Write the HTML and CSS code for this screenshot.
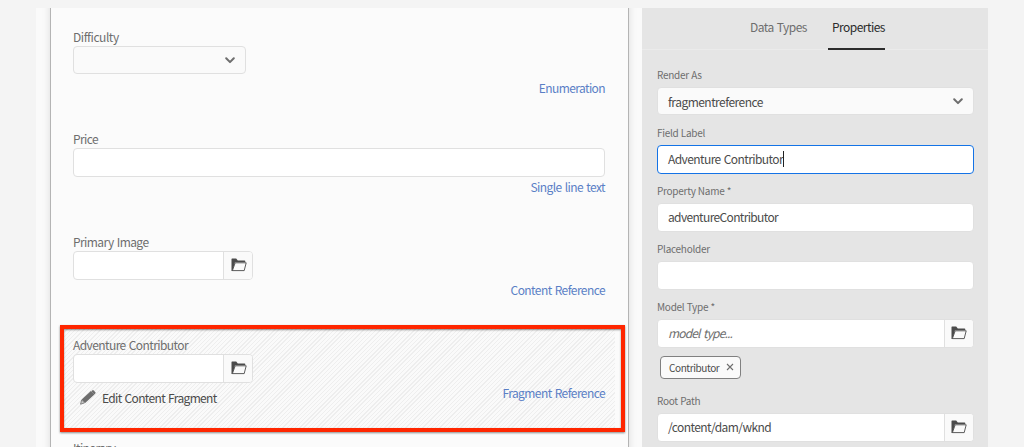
FILE: index.html
```html
<!DOCTYPE html>
<html lang="en">
<head>
<meta charset="utf-8">
<title>Content Fragment Model Editor</title>
<link rel="stylesheet" href="styles.css">
</head>
<body>
<svg class="defs" aria-hidden="true">
  <symbol id="folder" viewBox="0 0 16 14"><path d="M.5 13V1.2Q.5.6 1.1.6h4.1l1.6 1.9h6.7q.8 0 .8.8v.9H4L1.8 13z" fill="#4b4b4b"/><path d="M1.4 12.6 4.2 4.8h11l-2 7.8z" fill="#fafafa" stroke="#4b4b4b" stroke-width=".9" stroke-linejoin="round"/></symbol>
  <symbol id="chevron" viewBox="0 0 10 7"><path d="M1.2 1.2 5 5.1l3.8-3.9" fill="none" stroke="#6e6e6e" stroke-width="2" stroke-linecap="round" stroke-linejoin="round"/></symbol>
  <symbol id="pencil" viewBox="0 0 16 15"><path d="M11.3 1.3 12.5.3q.5-.4 1 0l1.9 1.9q.4.5 0 1l-1.2 1.2z" fill="#6e6e6e"/><path d="M10.9 1.1 14.4 4.5 5.2 13 1.7 9.5z" fill="#6e6e6e"/><path d="M1.7 9.9.5 14.2l4.1-1.3z" fill="#c8c8c8" stroke="#6e6e6e" stroke-width=".8" stroke-linejoin="round"/></symbol>
</svg>
<div class="app">
  <main class="canvas">
    <div class="sheet">
      <section class="item first">
        <div class="label">Difficulty</div>
        <div class="select small"><svg class="chev"><use href="#chevron"/></svg></div>
        <div class="foot loose"><span class="type enumeration">Enumeration</span></div>
      </section>
      <section class="item">
        <div class="label">Price</div>
        <div class="box"></div>
        <div class="foot"><span class="type">Single line text</span></div>
      </section>
      <section class="item">
        <div class="label">Primary Image</div>
        <div class="picker short"><div class="entry"></div><div class="browse"><svg class="folder"><use href="#folder"/></svg></div></div>
        <div class="foot"><span class="type">Content Reference</span></div>
      </section>
      <section class="item selected">
        <div class="label">Adventure Contributor</div>
        <div class="picker short"><div class="entry"></div><div class="browse"><svg class="folder"><use href="#folder"/></svg></div></div>
        <div class="foot"><span class="edit"><svg class="pencil"><use href="#pencil"/></svg><span>Edit Content Fragment</span></span><span class="type">Fragment Reference</span></div>
      </section>
      <section class="item">
        <div class="label">Itinerary</div>
      </section>
      <div class="highlight"></div>
    </div>
  </main>
  <aside class="panel">
    <nav class="tabs"><span class="tab">Data Types</span><span class="tab active">Properties</span></nav>
    <div class="fields">
      <div class="field"><div class="caption">Render As</div><div class="select wide"><span>fragmentreference</span><svg class="chev"><use href="#chevron"/></svg></div></div>
      <div class="field"><div class="caption">Field Label</div><div class="box focus"><span>Adventure Contributor</span><i class="caret"></i></div></div>
      <div class="field"><div class="caption">Property Name *</div><div class="box name">adventureContributor</div></div>
      <div class="field"><div class="caption">Placeholder</div><div class="box"></div></div>
      <div class="field model"><div class="caption">Model Type *</div><div class="picker"><div class="entry hint">model type...</div><div class="browse"><svg class="folder"><use href="#folder"/></svg></div></div>
        <div class="chip"><span>Contributor</span><svg class="close" viewBox="0 0 8 8"><path d="m1 1 6 6M7 1 1 7" stroke="#6e6e6e" stroke-width="1.1"/></svg></div></div>
      <div class="field root"><div class="caption">Root Path</div><div class="picker"><div class="entry">/content/dam/wknd</div><div class="browse"><svg class="folder"><use href="#folder"/></svg></div></div></div>
    </div>
  </aside>
</div>
</body>
</html>
```
FILE: styles.css
```css
* { box-sizing: border-box; }
body { margin: 0; background: #f4f4f4; font-family: "Noto Sans CJK JP", "Open Sans", sans-serif; font-size: 12px; letter-spacing: -.58px; word-spacing: 1px; color: #4b4b4b; height: 447px; overflow: hidden; }
.defs { position: absolute; width: 0; height: 0; }
.app { display: flex; margin: 8px 36px 0; height: 439px; overflow: hidden; }
.canvas { width: 606px; padding: 0 13px 0 14px; background: #fafafa; overflow: hidden; }
.sheet { position: relative; height: 700px; margin-top: -10px; padding: 30px 13px 0; border: 1px solid #b4b4b4; background: #fbfbfb; box-shadow: 0 0 8px rgba(0,0,0,.12); }
.item { height: 103px; padding: 0 10px 0 9px; }
.item.first { height: 102px; margin-top: -1px; }
.first .label { letter-spacing: -.45px; }
.selected { position: relative; }
.selected::before { content: ""; position: absolute; inset: -7px 0 11px 0; background: repeating-linear-gradient(135deg, #fafafa 0 2px, #eee 2px 3px); }
.selected > * { position: relative; }
.highlight { position: absolute; left: 9px; top: 326px; width: 565px; height: 107px; border: 4px solid #ff2600; box-shadow: 0 1px 2px rgba(0,0,0,.45), inset 0 1px 2px rgba(0,0,0,.45); }
.label, .type, .edit { line-height: 18px; height: 18px; white-space: nowrap; }
.label { color: #6e6e6e; }
.type { color: #5a7fc6; margin-left: auto; line-height: 17px; }
.enumeration { letter-spacing: -.6px; }
.foot { display: flex; margin-top: 1px; }
.foot.loose { margin-top: 5px; }
.edit { display: flex; align-items: center; gap: 6px; padding: 0 0 0 7px; height: 27px; letter-spacing: -.66px; }
.pencil { width: 16px; height: 15px; }
.box, .select { display: flex; align-items: center; height: 29px; border: 1px solid #e0e0e0; border-radius: 4px; background: #fff; padding: 0 10px 2px; white-space: nowrap; }
.select { height: 28px; background: #fafafa; justify-content: space-between; }
.select.small { width: 173px; justify-content: flex-end; padding-bottom: 0; }
.wide { letter-spacing: -.53px; padding-bottom: 0; }
.name { letter-spacing: -.65px; }
.chev { width: 10px; height: 7px; }
.picker { display: flex; height: 29px; border: 1px solid #e0e0e0; border-radius: 4px; background: #fff; overflow: hidden; }
.picker.short { width: 180px; }
.entry { flex: 1; padding-left: 10px; line-height: 25px; }
.hint { font-style: italic; color: #6e6e6e; letter-spacing: -.85px; word-spacing: 1.5px; }
.browse { display: flex; width: 29px; align-items: center; justify-content: center; border-left: 1px solid #e0e0e0; background: #fafafa; padding: 0 0 1px 2px; }
.panel .browse { padding-left: 0; }
.folder { width: 16px; height: 14px; }
.panel { width: 346px; background: #e5e5e5; }
.tabs { display: flex; height: 42px; padding-left: 97px; gap: 11px; border-bottom: 1px solid #ebebeb; }
.tab { width: 78px; padding-left: 11px; line-height: 38px; height: 42px; color: #6e6e6e; white-space: nowrap; letter-spacing: -.54px; }
.tab.active { width: 57px; padding-left: 4px; color: #2c2c2c; border-bottom: 2px solid #2c2c2c; }
.fields { padding: 16px 14px 0 15px; }
.field { height: 58px; }
.caption { height: 17px; margin-bottom: 4px; line-height: 18px; font-size: 10px; letter-spacing: -.27px; word-spacing: .3px; color: #6e6e6e; }
.focus { border-color: #1473e6; }
.caret { width: 1px; height: 16px; background: #222; }
.model { height: 94px; }
.chip { display: flex; align-items: center; gap: 7px; width: 81px; height: 23px; margin: 8px 0 0 3px; padding: 0 6px 1px 8px; border: 1px solid #808080; border-radius: 4px; background: #fafafa; font-size: 10px; letter-spacing: -.4px; }
.close { flex: none; width: 8px; height: 8px; }
```
